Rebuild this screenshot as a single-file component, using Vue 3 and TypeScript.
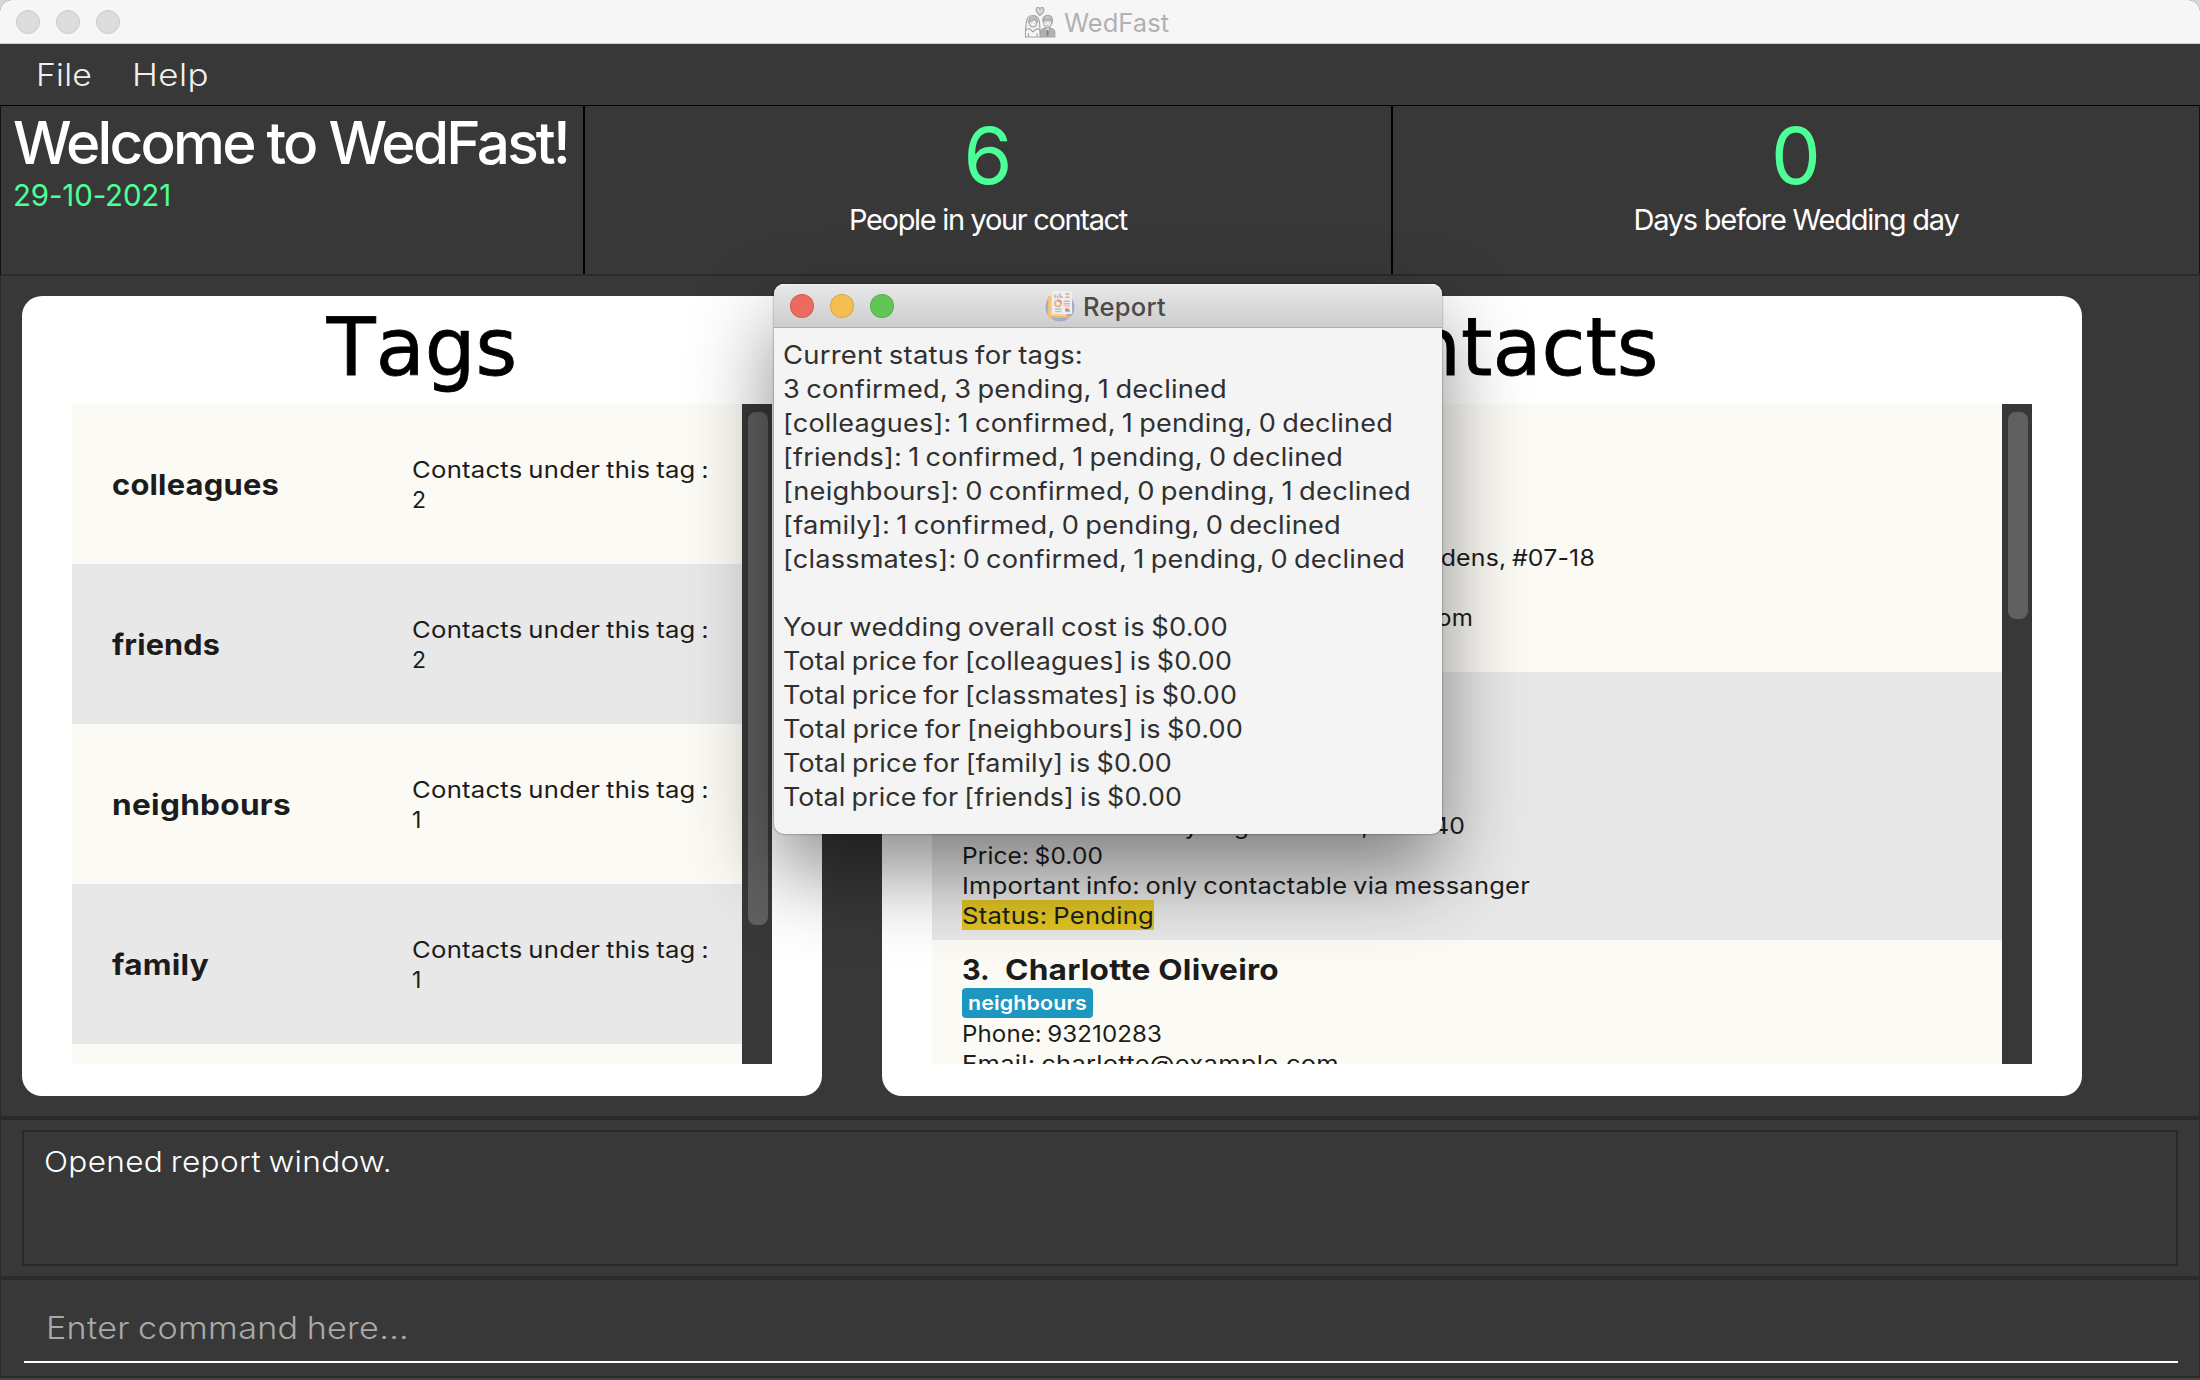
<script setup lang="ts">
import type { Directive } from 'vue'

interface Line {
  text: string
  width: number
}

interface Tag extends Line {
  count: number
}

interface Contact {
  index: number
  name: Line
  tag: Line
  lines: Line[]
  status?: Line
}

// Adjusts the tracking of a single line so that it takes the given width.
const vFit: Directive<HTMLElement, number> = {
  mounted(el, { value }) {
    const length = (el.textContent ?? '').length
    if (!value || !length) return
    const natural = el.getBoundingClientRect().width
    el.style.letterSpacing = `${(value - natural) / length}px`
  },
}

// Widens the letters of a line to the given width; a small part goes to tracking.
const vStretch: Directive<HTMLElement, number> = {
  mounted(el, { value }) {
    const length = (el.textContent ?? '').length
    if (!value || !length) return
    const natural = el.getBoundingClientRect().width
    const tracked = natural + (value - natural) * 0.15
    el.style.letterSpacing = `${(tracked - natural) / length}px`
    el.style.width = `${value}px`
    el.style.transformOrigin = 'left center'
    el.style.transform = `scaleX(${value / tracked})`
  },
}

const tags: Tag[] = [
  { text: 'colleagues', width: 167, count: 2 },
  { text: 'friends', width: 108, count: 2 },
  { text: 'neighbours', width: 179, count: 1 },
  { text: 'family', width: 97, count: 1 },
]

const contacts: Contact[] = [
  {
    index: 1,
    name: { text: 'Bernice Yu', width: 160 },
    tag: { text: 'colleagues', width: 111 },
    lines: [
      { text: 'Phone: 99272758', width: 200 },
      { text: 'Email: berniceyu@example.com', width: 372 },
      { text: 'Address: Blk 30 Lorong 3 Serangoon Gardens, #07-18', width: 633 },
      { text: 'Price: $0.00', width: 141 },
      { text: 'Important info: needs a seat in the quiet room', width: 511 },
    ],
    status: { text: 'Status: Pending', width: 192 },
  },
  {
    index: 2,
    name: { text: 'Alex Yeoh', width: 150 },
    tag: { text: 'friends', width: 73 },
    lines: [
      { text: 'Phone: 87438807', width: 200 },
      { text: 'Email: alexyeoh@example.com', width: 360 },
      { text: 'Address: Blk 30 Geylang Street 29, #06-40', width: 503 },
      { text: 'Price: $0.00', width: 141 },
      { text: 'Important info: only contactable via messanger', width: 568 },
    ],
    status: { text: 'Status: Pending', width: 192 },
  },
  {
    index: 3,
    name: { text: 'Charlotte Oliveiro', width: 274 },
    tag: { text: 'neighbours', width: 119 },
    lines: [
      { text: 'Phone: 93210283', width: 200 },
      { text: 'Email: charlotte@example.com', width: 377 },
    ],
  },
]

const report: Line[] = [
  { text: 'Current status for tags:', width: 300 },
  { text: '3 confirmed, 3 pending, 1 declined', width: 444 },
  { text: '[colleagues]: 1 confirmed, 1 pending, 0 declined', width: 610 },
  { text: '[friends]: 1 confirmed, 1 pending, 0 declined', width: 560 },
  { text: '[neighbours]: 0 confirmed, 0 pending, 1 declined', width: 628 },
  { text: '[family]: 1 confirmed, 0 pending, 0 declined', width: 558 },
  { text: '[classmates]: 0 confirmed, 1 pending, 0 declined', width: 622 },
  { text: '', width: 0 },
  { text: 'Your wedding overall cost is $0.00', width: 445 },
  { text: 'Total price for [colleagues] is $0.00', width: 449 },
  { text: 'Total price for [classmates] is $0.00', width: 454 },
  { text: 'Total price for [neighbours] is $0.00', width: 460 },
  { text: 'Total price for [family] is $0.00', width: 389 },
  { text: 'Total price for [friends] is $0.00', width: 399 },
]
</script>

<template>
  <div class="screen">
    <div class="window">
      <header class="titlebar">
        <div class="lights inactive"><i></i><i></i><i></i></div>
        <div class="caption">
          <svg class="couple" width="32" height="32" viewBox="0 0 32 32" fill="none" stroke="#a3a3a3" stroke-width="1.1">
            <path d="M16 9.5C12.6 6.8 12 5.2 12 3.8 12 1.2 15 .6 16 2.8c1-2.2 4-1.6 4 1 0 1.4-.6 3-4 5.7z" fill="#d6d6d6" />
            <path d="M2.5 29C.2 24.500 2 21 2.300 17 2.600 12 5.300 9.500 9 9.500s6.200 2.500 6.500 7.500c.3 4 1.300 8-.5 12z" fill="#ededed" />
            <path d="M4.800 17c-.6-4 1.500-6.300 4.200-6.300s4.900 2.300 4.200 6.300" fill="#c4c4c4" />
            <path d="M5.400 15.500c2.200 0 4-1 5-2.300.6 1.100 1.300 1.900 2.200 2.300 0 3.500-1.500 5.300-3.600 5.300s-3.600-1.800-3.600-5.300z" fill="#f4f4f4" />
            <path d="M1.500 31v-5c0-2 1.500-3 4-3.200L9 26l3.500-3.200c2.500.2 3.500 1.200 3.500 3.200v5z" fill="#f7f7f7" />
            <path d="M4.500 31v-4M13 31v-4M7.500 17h.8M10.300 17h.8" />
            <path d="M16.500 31v-5c0-2.200 1.700-3.300 4.500-3.700h5c2.800.4 4.800 1.500 4.800 3.700v5z" fill="#b2b2b2" />
            <path d="M21 22l2.600 6.500L26.200 22z" fill="#e4e4e4" />
            <path d="M23.600 24v6" stroke="#858585" stroke-width="1.800" />
            <path d="M19.500 15c0 4 1.700 6.300 4.100 6.300s4.200-2.300 4.200-6.300z" fill="#f2f2f2" />
            <path d="M19 16c-.8-4.500 1.500-6.800 4.700-6.800 3.300 0 5.300 2.300 4.500 6.800-.6-1.500-1-2.300-2.200-2.700-1.800.6-4 .6-5.600 0-.7.700-1.100 1.500-1.400 2.700z" fill="#c2c2c2" />
            <path d="M21.700 17h.8M24.900 17h.8M22.700 19.300h2" />
          </svg>
          <span v-fit="105">WedFast</span>
        </div>
      </header>

      <nav class="menubar">
        <span v-stretch="56" class="file">File</span>
        <span v-stretch="77">Help</span>
      </nav>

      <section class="summary">
        <div class="welcome">
          <h1 v-fit="555">Welcome to WedFast!</h1>
          <p v-fit="158">29-10-2021</p>
        </div>
        <div class="stat">
          <strong>6</strong>
          <span v-fit="278">People in your contact</span>
        </div>
        <div class="stat last">
          <strong>0</strong>
          <span v-fit="325">Days before Wedding day</span>
        </div>
      </section>

      <main class="panels">
        <section class="card tags">
          <h2>Tags</h2>
          <div class="scroller">
            <ul class="rows">
              <li v-for="tag in tags" :key="tag.text" class="tag-row">
                <span class="tag-name"><b v-stretch="tag.width">{{ tag.text }}</b></span>
                <span class="tag-count"><span v-stretch="297">Contacts under this tag :</span><span>{{ tag.count }}</span></span>
              </li>
              <li class="tag-row"></li>
            </ul>
            <div class="track"><div class="thumb"></div></div>
          </div>
        </section>

        <section class="card contacts">
          <h2>Contacts</h2>
          <div class="scroller">
            <ul class="rows">
              <li v-for="contact in contacts" :key="contact.index" class="contact-row">
                <div class="contact-name">
                  <b class="index">{{ contact.index }}.</b>
                  <b v-stretch="contact.name.width">{{ contact.name.text }}</b>
                </div>
                <div class="badge"><span v-stretch="contact.tag.width">{{ contact.tag.text }}</span></div>
                <div v-for="line in contact.lines" :key="line.text" class="detail">
                  <span v-stretch="line.width">{{ line.text }}</span>
                </div>
                <div v-if="contact.status" class="detail status">
                  <span v-stretch="contact.status.width">{{ contact.status.text }}</span>
                </div>
              </li>
            </ul>
            <div class="track"><div class="thumb"></div></div>
          </div>
        </section>
      </main>

      <section class="result">
        <div class="result-box"><span v-stretch="348">Opened report window.</span></div>
      </section>

      <section class="command">
        <div class="command-field"><span v-stretch="363">Enter command here...</span></div>
      </section>
    </div>

    <aside class="report">
      <header class="report-title">
        <div class="lights"><i class="close"></i><i class="minimise"></i><i class="zoom"></i></div>
        <div class="caption">
          <svg width="30" height="32" viewBox="0 0 30 32">
            <circle cx="15" cy="17" r="14.500" fill="#a3adc8" />
            <path d="M3 6h14v21H3z" fill="#f2c07c" />
            <path d="M5.500 4.500h16v23h-16z" fill="#f7d093" />
            <path d="M4 26h22l-2 2H6z" fill="#e9b878" />
            <path d="M7 1h20v23H7z" fill="#eaf0f4" />
            <path d="M10 8V4.500M12.500 8V5.500M15 8V3.500" stroke="#e8a187" stroke-width="1.500" />
            <path d="M17 8V6" stroke="#8fc3cf" stroke-width="1.500" />
            <path d="M20.500 3h4v2h-4zM20.500 6.200h4v2h-4z" fill="#efb58e" />
            <circle cx="13" cy="13.500" r="3" fill="none" stroke="#f0b57e" stroke-width="1.800" />
            <path d="M13 10.500a3 3 0 0 1 3 3" fill="none" stroke="#e88f86" stroke-width="1.800" />
            <path d="M18.500 10.500h6.500v1.600h-6.500zM18.500 13h6.500v1.600h-6.500zM18.500 15.500h6.500v1h-6.500z" fill="#eda7a3" />
            <path d="M10 18.500h6.500v1.400H10zM10 21h6.500v1.300H10z" fill="#9fcbd8" />
            <circle cx="22" cy="20" r="2" fill="#e5837f" />
            <path d="M22 20h3v2.500z" fill="#7fb890" />
          </svg>
          <span v-fit="83">Report</span>
        </div>
      </header>
      <div class="report-body">
        <div v-for="(line, i) in report" :key="i" class="report-line">
          <span v-stretch="line.width">{{ line.text }}</span>
        </div>
      </div>
    </aside>
  </div>
</template>

<style>
body {
  margin: 0;
}
</style>

<style scoped>
.screen {
  position: relative;
  width: 2200px;
  height: 1380px;
  overflow: hidden;
  background: #d8d8d8;
  font-family: Inter, 'Open Sans', sans-serif;
  white-space: nowrap;
}
.screen * {
  box-sizing: border-box;
}
h1, h2, p, ul {
  margin: 0;
  padding: 0;
  font-weight: 400;
  list-style: none;
}
b {
  font-weight: 650;
}
[class] > span,
b, h1, p {
  display: inline-block;
}
.window {
  display: flex;
  flex-direction: column;
  width: 2200px;
  height: 1380px;
  border-radius: 12px 12px 0 0;
  overflow: hidden;
  background: #383838;
}
.titlebar {
  flex: none;
  display: flex;
  align-items: center;
  height: 44px;
  background: #f6f6f6;
  border-bottom: 1px solid #cfd0d0;
}
.lights {
  display: flex;
  gap: 16px;
  padding-left: 16px;
}
.lights i {
  width: 24px;
  height: 24px;
  border-radius: 50%;
  border: 1px solid rgba(0, 0, 0, 0.12);
}
.inactive i {
  background: #dcdcdc;
  border-color: #cacaca;
}
.caption {
  display: flex;
  align-items: center;
  gap: 8px;
  font-size: 25.5px;
}
.caption span {
  padding-top: 2px;
}
.titlebar .caption {
  margin-left: 904px;
  line-height: 44px;
  color: #b1b1b1;
}
.menubar {
  flex: none;
  display: flex;
  gap: 40px;
  height: 62px;
  padding-left: 36px;
  border-bottom: 1px solid #000;
  font-size: 31px;
  font-weight: 300;
  line-height: 61px;
  color: #f0f0f0;
}
.summary {
  flex: none;
  display: flex;
  height: 170px;
  border-bottom: 2px solid #2b2b2b;
  border-left: 1px solid #111;
  color: #fff;
}
.welcome {
  display: flex;
  flex-direction: column;
  align-items: flex-start;
  width: 584px;
  padding-left: 12px;
  border-right: 2px solid #000;
}
.welcome h1 {
  padding-top: 1px;
  font-size: 58.5px;
  font-weight: 450;
  line-height: 72px;
}
.welcome p {
  font-size: 29.5px;
  font-weight: 420;
  line-height: 32px;
  color: #4dff97;
}
.stat {
  display: flex;
  flex-direction: column;
  align-items: center;
  width: 808px;
  padding-top: 9px;
  border-right: 2px solid #000;
}
.stat.last {
  flex: 1;
  border-right: 1px solid #111;
}
.stat strong {
  font-size: 79px;
  font-weight: 410;
  line-height: 80px;
  color: #4dff97;
}
.stat span {
  margin-top: 7px;
  font-size: 29px;
  font-weight: 430;
  line-height: 36px;
}
.panels {
  flex: none;
  display: flex;
  gap: 60px;
  height: 844px;
  padding: 20px 0 0 21px;
  border-left: 1px solid #2b2b2b;
  border-right: 1px solid #2b2b2b;
  border-bottom: 4px solid #2a2a2a;
}
.card {
  display: flex;
  flex-direction: column;
  height: 800px;
  padding: 0 50px 32px;
  border-radius: 20px;
  background: #fff;
}
.tags {
  width: 800px;
}
.contacts {
  width: 1200px;
}
.card h2 {
  flex: none;
  height: 108px;
  font-family: 'DejaVu Sans', Verdana, sans-serif;
  font-size: 80px;
  font-kerning: none;
  line-height: 104px;
  text-align: center;
  color: #000;
  -webkit-text-stroke: 0.8px #000;
}
.scroller {
  flex: 1;
  min-height: 0;
  display: flex;
  overflow: hidden;
}
.rows {
  flex: 1;
  color: #1c1c1c;
}
.rows li:nth-child(odd) {
  background: #fbfaf5;
}
.rows li:nth-child(even) {
  background: #e8e8e8;
}
.track {
  width: 30px;
  padding: 8px 4px 0 6px;
  background: #383838;
}
.thumb {
  height: 513px;
  border-radius: 8px;
  background: #606060;
}
.contacts .thumb {
  height: 207px;
}
.tag-row {
  display: flex;
  align-items: center;
  height: 160px;
  padding-left: 40px;
}
.tag-name {
  width: 300px;
  font-size: 29px;
}
.tag-row .tag-count {
  display: flex;
  flex-direction: column;
  align-items: flex-start;
  padding-top: 2px;
  font-size: 23px;
  font-weight: 430;
  line-height: 30px;
  word-spacing: -1.5px;
}
.contact-row {
  height: 268px;
  padding: 10px 0 0 30px;
}
.contact-name {
  display: flex;
  height: 38px;
  font-size: 29px;
  line-height: 39px;
}
.index {
  width: 43px;
}
.badge {
  display: table;
  height: 30px;
  padding: 0 6px;
  border-radius: 4px;
  background: #1d96c0;
  color: #fff;
  font-size: 20px;
  font-weight: 620;
  line-height: 30px;
}
.detail {
  height: 30px;
  font-size: 23px;
  font-weight: 430;
  line-height: 30px;
  word-spacing: -1.5px;
}
.detail span {
  position: relative;
  top: 1px;
  vertical-align: top;
}
.status {
  display: table;
  background: #e0c322;
}
.result {
  flex: none;
  height: 160px;
  padding: 10px 21px;
  border: 1px solid #2b2b2b;
  border-width: 0 1px 4px;
}
.result-box {
  height: 136px;
  padding: 8px 0 0 20px;
  border: 2px solid #292929;
  color: #fff;
  font-size: 28.5px;
  font-weight: 330;
  line-height: 44px;
  word-spacing: -1.5px;
}
.command {
  flex: none;
  height: 98px;
  padding: 0 21px 0 23px;
  border: 1px solid #2b2b2b;
  border-width: 0 1px 2px;
}
.command-field {
  height: 83px;
  padding: 23px 0 0 22px;
  border-bottom: 2px solid #fff;
  color: #a9a9a9;
  font-size: 31px;
  font-weight: 300;
  line-height: 50px;
  word-spacing: -1.5px;
}
.window::after {
  content: '';
  height: 2px;
  background: #454545;
}
.report {
  position: absolute;
  left: 774px;
  top: 284px;
  width: 668px;
  height: 550px;
  border-radius: 10px;
  background: #f4f4f4;
  box-shadow: 0 0 2px rgba(0, 0, 0, 0.6), 0 38px 84px rgba(0, 0, 0, 0.46);
}
.report-title {
  display: flex;
  align-items: center;
  height: 44px;
  border-bottom: 1px solid #aaa;
  border-radius: 10px 10px 0 0;
  background: linear-gradient(#e8e8e8, #cdcdcd);
  box-shadow: inset 0 1px 0 #f4f4f4;
}
.close {
  background: #ed6a5f;
}
.minimise {
  background: #f5bf4f;
}
.zoom {
  background: #62c655;
}
.report-title .caption {
  margin-left: 151px;
  font-weight: 450;
  line-height: 43px;
  color: #4a4a4a;
}
.report-title .caption span {
  padding-top: 1px;
}
.report-body {
  padding: 10px 0 0 9px;
  color: #303030;
  font-size: 25px;
  word-spacing: -1.5px;
}
.report-line {
  height: 34px;
  line-height: 34px;
}
</style>
